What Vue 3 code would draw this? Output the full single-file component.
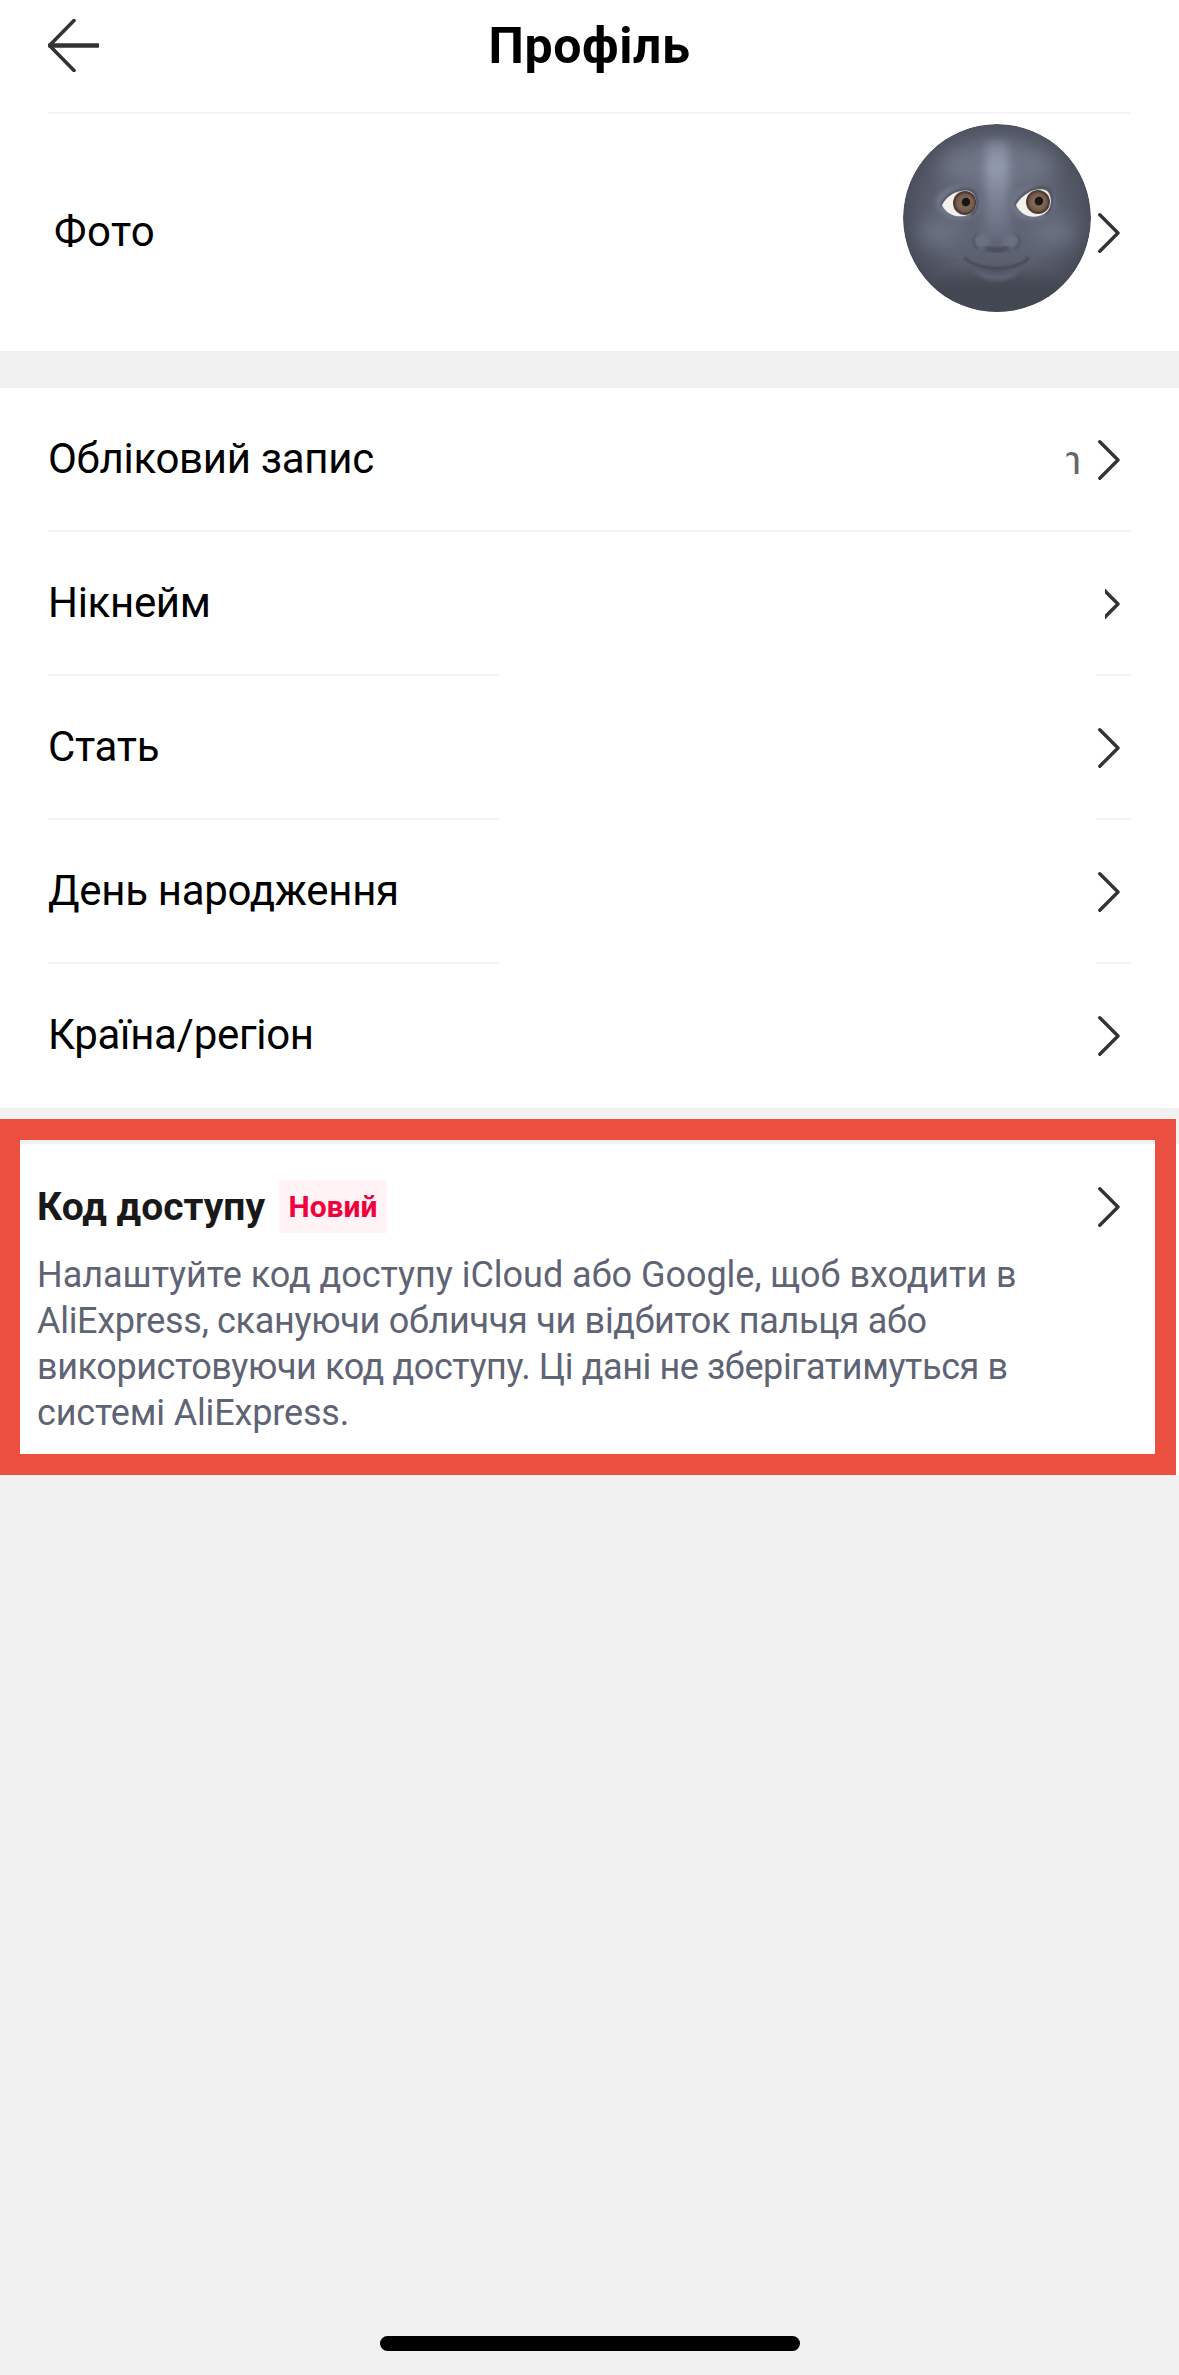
<template>
  <div class="page">
    <header class="top-bar">
      <svg class="back" viewBox="0 0 51 53" fill="none" stroke="#333" stroke-linecap="round" stroke-linejoin="round">
        <polyline points="26,1.5 1.5,26.5 26,51.5" stroke-width="3.6" />
        <line x1="2" y1="26.5" x2="50" y2="26.5" stroke-width="4.4" />
      </svg>
      <h1 class="title">Профіль</h1>
    </header>

    <section class="photo-block">
      <div class="photo-row">
        <span class="photo-label">Фото</span>
        <div class="photo-side">
          <svg class="moon" viewBox="0 0 188 188">
            <defs>
              <radialGradient id="moonBase" cx="50%" cy="46%" r="52%">
                <stop offset="0%" stop-color="#626878" />
                <stop offset="62%" stop-color="#5c6170" />
                <stop offset="88%" stop-color="#4f5361" />
                <stop offset="100%" stop-color="#484c59" />
              </radialGradient>
              <linearGradient id="bridge" x1="0" y1="0" x2="0" y2="1">
                <stop offset="0%" stop-color="#7d8498" />
                <stop offset="25%" stop-color="#949cb0" />
                <stop offset="60%" stop-color="#7b8296" />
                <stop offset="100%" stop-color="#666c7d" />
              </linearGradient>
              <radialGradient id="iris" cx="50%" cy="50%" r="50%">
                <stop offset="0%" stop-color="#3e3028" />
                <stop offset="45%" stop-color="#84695a" />
                <stop offset="85%" stop-color="#6f5848" />
                <stop offset="100%" stop-color="#43362f" />
              </radialGradient>
              <filter id="blurL" x="-50%" y="-50%" width="200%" height="200%"><feGaussianBlur stdDeviation="9" /></filter>
              <filter id="blurM" x="-50%" y="-50%" width="200%" height="200%"><feGaussianBlur stdDeviation="5" /></filter>
              <filter id="blurS" x="-50%" y="-50%" width="200%" height="200%"><feGaussianBlur stdDeviation="2" /></filter>
              <filter id="blurXS" x="-50%" y="-50%" width="200%" height="200%"><feGaussianBlur stdDeviation="0.8" /></filter>
              <clipPath id="disc"><circle cx="94" cy="94" r="94" /></clipPath>
              <clipPath id="eyeL"><path d="M39 81 C46 68 61 64 68 68 C75 73 75 85 67 90 C57 95 44 92 39 81 Z" /></clipPath>
              <clipPath id="eyeR"><path d="M113 81 C120 68 137 62 144 67 C150 73 149 85 141 90 C130 96 118 92 113 81 Z" /></clipPath>
            </defs>

            <g clip-path="url(#disc)">
              <circle cx="94" cy="94" r="94" fill="url(#moonBase)" />
              <ellipse cx="94" cy="172" rx="78" ry="22" fill="#434651" filter="url(#blurL)" />
              <ellipse cx="94" cy="42" rx="56" ry="22" fill="#6f7586" filter="url(#blurL)" />
              <ellipse cx="38" cy="108" rx="22" ry="14" fill="#6b7182" filter="url(#blurL)" />
              <ellipse cx="150" cy="108" rx="22" ry="14" fill="#6b7182" filter="url(#blurL)" />

              <!-- bridge of the nose -->
              <path d="M84 18 C80 40 84 85 81 114 L107 114 C104 85 108 40 104 18 Z" fill="url(#bridge)" filter="url(#blurM)" />

              <!-- eye sockets -->
              <ellipse cx="56" cy="79" rx="23" ry="17" fill="#6f7588" filter="url(#blurS)" />
              <ellipse cx="129" cy="79" rx="23" ry="17" fill="#6f7588" filter="url(#blurS)" />
              <path d="M38 82 C45 67 62 62 70 67 C76 72 76 86 68 91" fill="none" stroke="#4b4f5c" stroke-width="2.4" filter="url(#blurXS)" />
              <path d="M112 82 C119 66 138 60 146 66 C151 72 150 86 142 91" fill="none" stroke="#4b4f5c" stroke-width="2.4" filter="url(#blurXS)" />

              <g clip-path="url(#eyeL)">
                <rect x="36" y="60" width="42" height="38" fill="#f4f0ea" />
                <circle cx="62" cy="79" r="12" fill="#4d3f37" />
                <circle cx="62" cy="79" r="10.6" fill="url(#iris)" />
                <circle cx="63" cy="78" r="4.2" fill="#1a1614" />
                <rect x="36" y="60" width="42" height="8" fill="#3f3b3d" opacity="0.35" filter="url(#blurXS)" />
              </g>
              <g clip-path="url(#eyeR)">
                <rect x="110" y="58" width="42" height="40" fill="#f4f0ea" />
                <circle cx="135" cy="78" r="12" fill="#4d3f37" />
                <circle cx="135" cy="78" r="10.6" fill="url(#iris)" />
                <circle cx="136" cy="77" r="4.2" fill="#1a1614" />
                <rect x="110" y="58" width="42" height="7" fill="#3f3b3d" opacity="0.35" filter="url(#blurXS)" />
              </g>

              <!-- nose -->
              <ellipse cx="79" cy="117" rx="8.5" ry="7" fill="#6b7183" filter="url(#blurS)" />
              <ellipse cx="108" cy="117" rx="8.5" ry="7" fill="#6b7183" filter="url(#blurS)" />
              <path d="M74 110 C69 114 69 122 76 125" fill="none" stroke="#4a4d5a" stroke-width="1.6" filter="url(#blurXS)" />
              <path d="M113 110 C118 114 118 122 111 125" fill="none" stroke="#4a4d5a" stroke-width="1.6" filter="url(#blurXS)" />
              <path d="M83 124 C87 126 90 124 94 127 C98 124 101 126 105 124" fill="none" stroke="#363842" stroke-width="3" stroke-linecap="round" filter="url(#blurS)" />

              <!-- mouth -->
              <path d="M70 145 C84 153 104 153 118 145 C108 160 80 160 70 145 Z" fill="#6f7587" opacity="0.7" filter="url(#blurS)" />
              <path d="M62 134 C64 137 66 138 69 139 C84 146 104 146 119 139 C122 138 124 136 125 134" fill="none" stroke="#3e404b" stroke-width="1.8" stroke-linecap="round" filter="url(#blurXS)" />
            </g>
          </svg>
          <Chevron />
        </div>
      </div>
    </section>

    <section class="list">
      <div v-for="row in rows" :key="row.label" class="row">
        <span class="row-label">{{ row.label }}</span>
        <span v-if="row.tail" class="row-tail">n</span>
        <Chevron :class="{ cut: row.cutChevron }" />
        <div v-if="row.line" class="line" :class="{ split: row.split }"></div>
      </div>
    </section>

    <section class="passkey">
      <div class="passkey-head">
        <span class="passkey-title">Код доступу</span>
        <span class="badge">Новий</span>
        <Chevron class="passkey-chevron" />
      </div>
      <div class="passkey-text">
        <div v-for="line in textLines" :key="line.text" :style="{ letterSpacing: line.spacing + 'px' }">{{ line.text }}</div>
      </div>
      <div class="marker"></div>
    </section>

    <div class="home-bar"></div>
  </div>
</template>

<script setup>
import { h } from 'vue'

const Chevron = (props, { attrs }) =>
  h('svg', { ...attrs, class: ['chevron', attrs.class], viewBox: '0 0 22 40', fill: 'none' }, [
    h('polyline', {
      points: '1.8,1.8 20,20 1.8,38.2',
      stroke: '#333',
      'stroke-width': '3.4',
      'stroke-linecap': 'round',
      'stroke-linejoin': 'round'
    })
  ])

const rows = [
  { label: 'Обліковий запис', tail: true, line: true },
  { label: 'Нікнейм', cutChevron: true, line: true, split: true },
  { label: 'Стать', line: true, split: true },
  { label: 'День народження', line: true, split: true },
  { label: 'Країна/регіон' }
]

const textLines = [
  { text: 'Налаштуйте код доступу iCloud або Google, щоб входити в', spacing: -0.03 },
  { text: 'AliExpress, скануючи обличчя чи відбиток пальця або', spacing: -0.3 },
  { text: 'використовуючи код доступу. Ці дані не зберігатимуться в', spacing: -0.4 },
  { text: 'системі AliExpress.', spacing: -0.15 }
]
</script>

<style>
body {
  background: #f1f1f1;
}
</style>

<style scoped>
.page {
  display: flex;
  flex-direction: column;
  height: 2375px;
  overflow: hidden;
  background: #f1f1f1;
  color: #000;
  font-family: Roboto, "Noto Sans", sans-serif;
}

.top-bar {
  position: relative;
  height: 112px;
  background: #fff;
  display: flex;
  justify-content: center;
}

.back {
  position: absolute;
  left: 48px;
  top: 19px;
  width: 51px;
  height: 53px;
}

.title {
  margin: 16px 0 0;
  font-size: 50px;
  line-height: 60px;
  letter-spacing: 0.6px;
  font-weight: 700;
}

.photo-block {
  background: #fff;
  padding: 0 48px;
}

.photo-row {
  height: 239px;
  display: flex;
  align-items: center;
  justify-content: space-between;
  border-top: 2px solid #f3f3f3;
  box-sizing: border-box;
  padding-right: 11px;
}

.photo-label {
  margin-left: 6px;
  margin-bottom: 3px;
  font-size: 42px;
  letter-spacing: 0.5px;
}

.photo-side {
  display: flex;
  align-items: center;
  gap: 7px;
}

.moon {
  width: 188px;
  height: 188px;
  margin-top: -30px;
}

.chevron {
  flex: none;
  width: 22px;
  height: 40px;
}

.chevron.cut {
  clip-path: inset(0 0 0 7px);
}

.list {
  margin-top: 37px;
  background: #fff;
}

.row {
  position: relative;
  height: 144px;
  display: flex;
  align-items: center;
  padding: 0 59px 0 48px;
}

.row-label {
  flex: 1;
  margin-bottom: 3px;
  font-size: 42px;
  letter-spacing: -0.3px;
}

.row-tail {
  margin-right: 17px;
  font-size: 40px;
  color: #666;
  clip-path: inset(0 0 0 34%);
}

.line {
  position: absolute;
  left: 48px;
  right: 48px;
  bottom: 0;
  height: 2px;
  background: #f3f3f3;
}

.line.split {
  background: linear-gradient(to right, #f3f3f3 451px, #fff 451px, #fff 1048px, #f3f3f3 1048px);
}

.passkey {
  position: relative;
  margin-top: 36px;
  height: 331px;
  box-sizing: border-box;
  background: #fff;
  padding: 36px 59px 0 37px;
}

.passkey-head {
  display: flex;
  align-items: center;
  height: 53px;
}

.passkey-title {
  font-size: 39px;
  font-weight: 700;
  color: #191919;
}

.badge {
  margin-left: 14px;
  width: 108px;
  height: 53px;
  line-height: 53px;
  text-align: center;
  background: #fff3f5;
  color: #f0003c;
  font-size: 30px;
  font-weight: 700;
}

.passkey-chevron {
  margin-left: auto;
}

.passkey-text {
  margin-top: 19px;
  font-size: 36px;
  line-height: 46px;
  color: #5f6475;
  white-space: nowrap;
}

/* annotation frame drawn over the card */
.marker {
  position: absolute;
  left: 0;
  top: -25px;
  width: 1176px;
  height: 356px;
  box-sizing: border-box;
  border: solid #ec5040;
  border-width: 21px 21px 21px 20px;
  pointer-events: none;
}

.home-bar {
  margin: auto 0 24px 380px;
  width: 420px;
  height: 15px;
  border-radius: 8px;
  background: #000;
}
</style>
